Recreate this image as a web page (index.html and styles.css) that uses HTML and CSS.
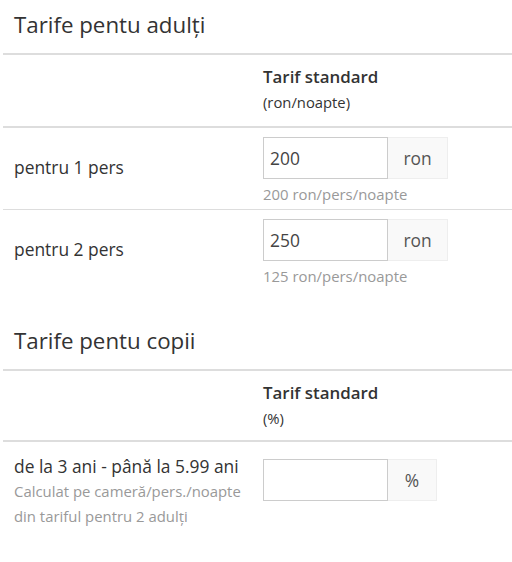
FILE: index.html
```html
<!DOCTYPE html>
<html lang="ro">
<head>
<meta charset="utf-8">
<link rel="stylesheet" href="styles.css">
</head>
<body>
<div class="page">
  <h2 class="section-title">Tarife pentu adulţi</h2>
  <div class="table">
    <div class="row head">
      <div class="cell"></div>
      <div class="cell">
        <div class="col-title">Tarif standard</div>
        <div class="col-sub">(ron/noapte)</div>
      </div>
    </div>
    <div class="row mid">
      <div class="cell label">pentru 1 pers</div>
      <div class="cell">
        <div class="input-group">
          <div class="input">200</div>
          <div class="addon">ron</div>
        </div>
        <div class="help">200 ron/pers/noapte</div>
      </div>
    </div>
    <div class="row mid last">
      <div class="cell label">pentru 2 pers</div>
      <div class="cell">
        <div class="input-group">
          <div class="input">250</div>
          <div class="addon">ron</div>
        </div>
        <div class="help">125 ron/pers/noapte</div>
      </div>
    </div>
  </div>

  <h2 class="section-title second">Tarife pentu copii</h2>
  <div class="table">
    <div class="row head short">
      <div class="cell"></div>
      <div class="cell">
        <div class="col-title">Tarif standard</div>
        <div class="col-sub">(%)</div>
      </div>
    </div>
    <div class="row top last">
      <div class="cell label">
        <div>de la 3 ani - până la 5.99 ani</div>
        <div class="note">Calculat pe cameră/pers./noapte<br>din tariful pentru 2 adulţi</div>
      </div>
      <div class="cell field">
        <div class="input-group">
          <div class="input"></div>
          <div class="addon pct">%</div>
        </div>
      </div>
    </div>
  </div>
</div>
</body>
</html>
```
FILE: styles.css
```css
html, body {
  margin: 0;
  padding: 0;
  background: #fff;
}
body {
  font-family: "Open Sans", "Noto Sans", sans-serif;
  color: #333;
}
.page {
  padding-left: 3px;
}
.section-title {
  margin: 0;
  padding: 10px 0 0 11px;
  height: 43px;
  font-size: 22.3px;
  font-weight: 400;
  line-height: 30px;
  color: #333;
  border-bottom: 2px solid #ddd;
}
.section-title.second {
  margin-top: 25px;
}
.row {
  display: grid;
  grid-template-columns: 249px 1fr;
  border-bottom: 1px solid #ddd;
  align-items: start;
}
.row.head {
  border-bottom: 2px solid #ddd;
  height: 71px;
}
.row.head.short {
  height: 69px;
}
.row.mid {
  height: 81px;
}
.row.mid .cell {
  padding-top: 9px;
}
.row.mid .cell.label {
  padding-top: 27px;
}
.row.last {
  border-bottom: none;
}
.cell {
  padding: 0 11px;
}
.head .cell {
  padding-top: 10px;
}
.col-title {
  font-size: 16.9px;
  font-weight: 600;
  line-height: 24px;
}
.col-sub {
  font-size: 14.8px;
  line-height: 27px;
}
.label {
  font-size: 17.4px;
  line-height: 24px;
}
.input-group {
  display: flex;
  height: 42px;
}
.input {
  border: 1px solid #ccc;
  font-size: 17.4px;
  line-height: 40px;
  padding: 0 6px;
  box-sizing: border-box;
  width: 125px;
  color: #444;
}
.addon {
  width: 60px;
  box-sizing: border-box;
  border: 1px solid #eee;
  border-left: none;
  background: #f9f9f9;
  font-size: 17.4px;
  line-height: 40px;
  text-align: center;
  color: #555;
}
.addon.pct {
  width: 49px;
}
.help {
  font-size: 14.9px;
  color: #999;
  line-height: 20px;
  margin-top: 5px;
}
.top .cell.label {
  padding-top: 12px;
}
.top .cell.field {
  padding-top: 17px;
}
.note {
  font-size: 14.9px;
  color: #999;
  line-height: 25px;
  margin-top: 1px;
}
```
